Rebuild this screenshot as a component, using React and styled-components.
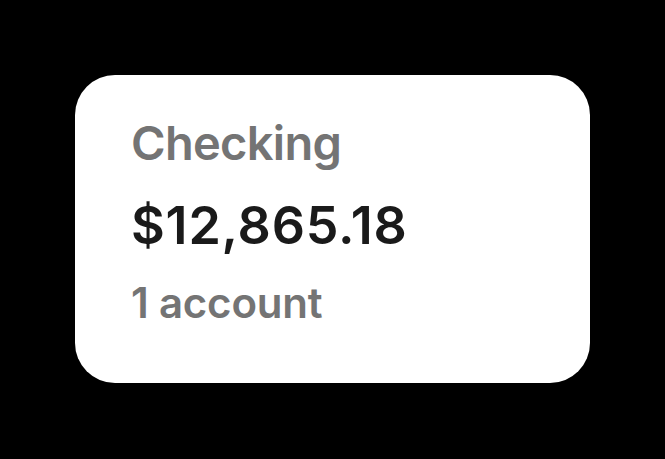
import React from 'react'
import styled, { createGlobalStyle } from 'styled-components'

const Global = createGlobalStyle`
  html, body {
    margin: 0;
    padding: 0;
    background: #000;
  }
  body {
    font-family: Inter, "Noto Sans", sans-serif;
    -webkit-font-smoothing: antialiased;
  }
`

const Page = styled.div`
  width: 665px;
  height: 459px;
  display: flex;
  align-items: flex-start;
  padding: 75px 0 0 75px;
  box-sizing: border-box;
`

const Card = styled.div`
  width: 515px;
  height: 308px;
  box-sizing: border-box;
  background: #fff;
  border-radius: 40px;
  padding: 40px 56px 0;
  display: flex;
  flex-direction: column;
`

const Label = styled.div`
  font-size: ${p => p.size}px;
  font-weight: 600;
  line-height: 1.2;
  color: ${p => (p.muted ? '#747474' : '#1a1a1a')};
  margin-top: ${p => p.gap || 0}px;
  letter-spacing: ${p => p.track || 0}px;
`

export default function App() {
  return (
    <>
      <Global />
      <Page>
        <Card>
          <Label muted size={47} track={-0.7}>Checking</Label>
          <Label size={52} gap={23.5} track={0.8}>$12,865.18</Label>
          <Label muted size={42} gap={21} track={-0.2}>1 account</Label>
        </Card>
      </Page>
    </>
  )
}
